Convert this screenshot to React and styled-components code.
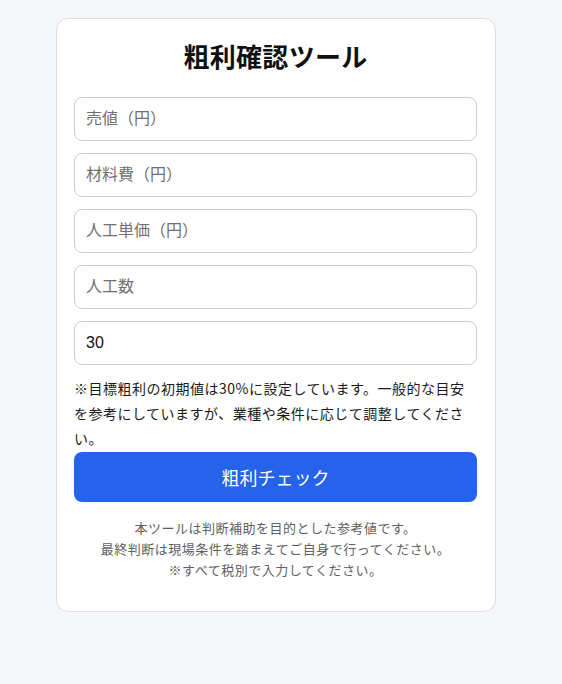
import React, { useState } from "react";
import styled, { createGlobalStyle } from "styled-components";

const GlobalStyle = createGlobalStyle`
  * {
    box-sizing: border-box;
  }

  body {
    margin: 0;
    background: #f5f6fa;
    color: #222;
    font-family: "Noto Sans CJK JP", "Noto Sans", sans-serif;
    letter-spacing: 0.5px;
  }
`;

const Page = styled.div`
  min-height: 100vh;
  padding: 18px 0 40px 56px;
`;

const Card = styled.div`
  width: 440px;
  padding: 18px 18px 18px 17px;
  background: #fff;
  border: 1px solid #dddddd;
  border-radius: 12px;
`;

const Title = styled.h1`
  margin: 0 0 23px;
  font-size: 26px;
  font-weight: 700;
  color: #111;
  text-align: center;
  letter-spacing: 0.3px;
`;

const Field = styled.input`
  display: block;
  width: 100%;
  height: 44px;
  margin-bottom: 12px;
  padding: 0 11px;
  border: 1px solid #cccccc;
  border-radius: 8px;
  font-family: "Liberation Sans", "Noto Sans CJK JP", sans-serif;
  font-size: 16px;
  color: #111;
  background: #fff;
  outline: none;

  &:last-of-type {
    margin-bottom: 0;
  }

  &::placeholder {
    color: #707070;
  }
`;

const Note = styled.p`
  margin: 11px 0 0;
  font-size: 14px;
  line-height: 1.8;
  color: #1a1a1a;
`;

const CheckButton = styled.button`
  display: block;
  width: 100%;
  height: 50px;
  border: none;
  border-radius: 8px;
  background: #2563eb;
  color: #fff;
  font-family: "Noto Sans CJK JP", sans-serif;
  font-size: 18px;
  cursor: pointer;
`;

const Disclaimer = styled.p`
  margin: 15px 0 13px;
  font-size: 13px;
  line-height: 21px;
  color: #606060;
  text-align: center;
`;

const fields = [
  { name: "price", placeholder: "売値（円）" },
  { name: "material", placeholder: "材料費（円）" },
  { name: "laborUnit", placeholder: "人工単価（円）" },
  { name: "laborCount", placeholder: "人工数" },
  { name: "target", placeholder: "目標粗利（%）" },
];

const App = () => {
  const [values, setValues] = useState({ target: "30" });

  const update = (e) =>
    setValues({ ...values, [e.target.name]: e.target.value });

  return (
    <>
      <GlobalStyle />
      <Page>
        <Card>
          <Title>粗利確認ツール</Title>
          {fields.map((f) => (
            <Field
              key={f.name}
              type="number"
              name={f.name}
              placeholder={f.placeholder}
              value={values[f.name] || ""}
              onChange={update}
            />
          ))}
          <Note>
            ※目標粗利の初期値は30%に設定しています。一般的な目安を参考にしていますが、業種や条件に応じて調整してください。
          </Note>
          <CheckButton type="button">粗利チェック</CheckButton>
          <Disclaimer>
            本ツールは判断補助を目的とした参考値です。
            <br />
            最終判断は現場条件を踏まえてご自身で行ってください。
            <br />
            ※すべて税別で入力してください。
          </Disclaimer>
        </Card>
      </Page>
    </>
  );
};

export default App;
